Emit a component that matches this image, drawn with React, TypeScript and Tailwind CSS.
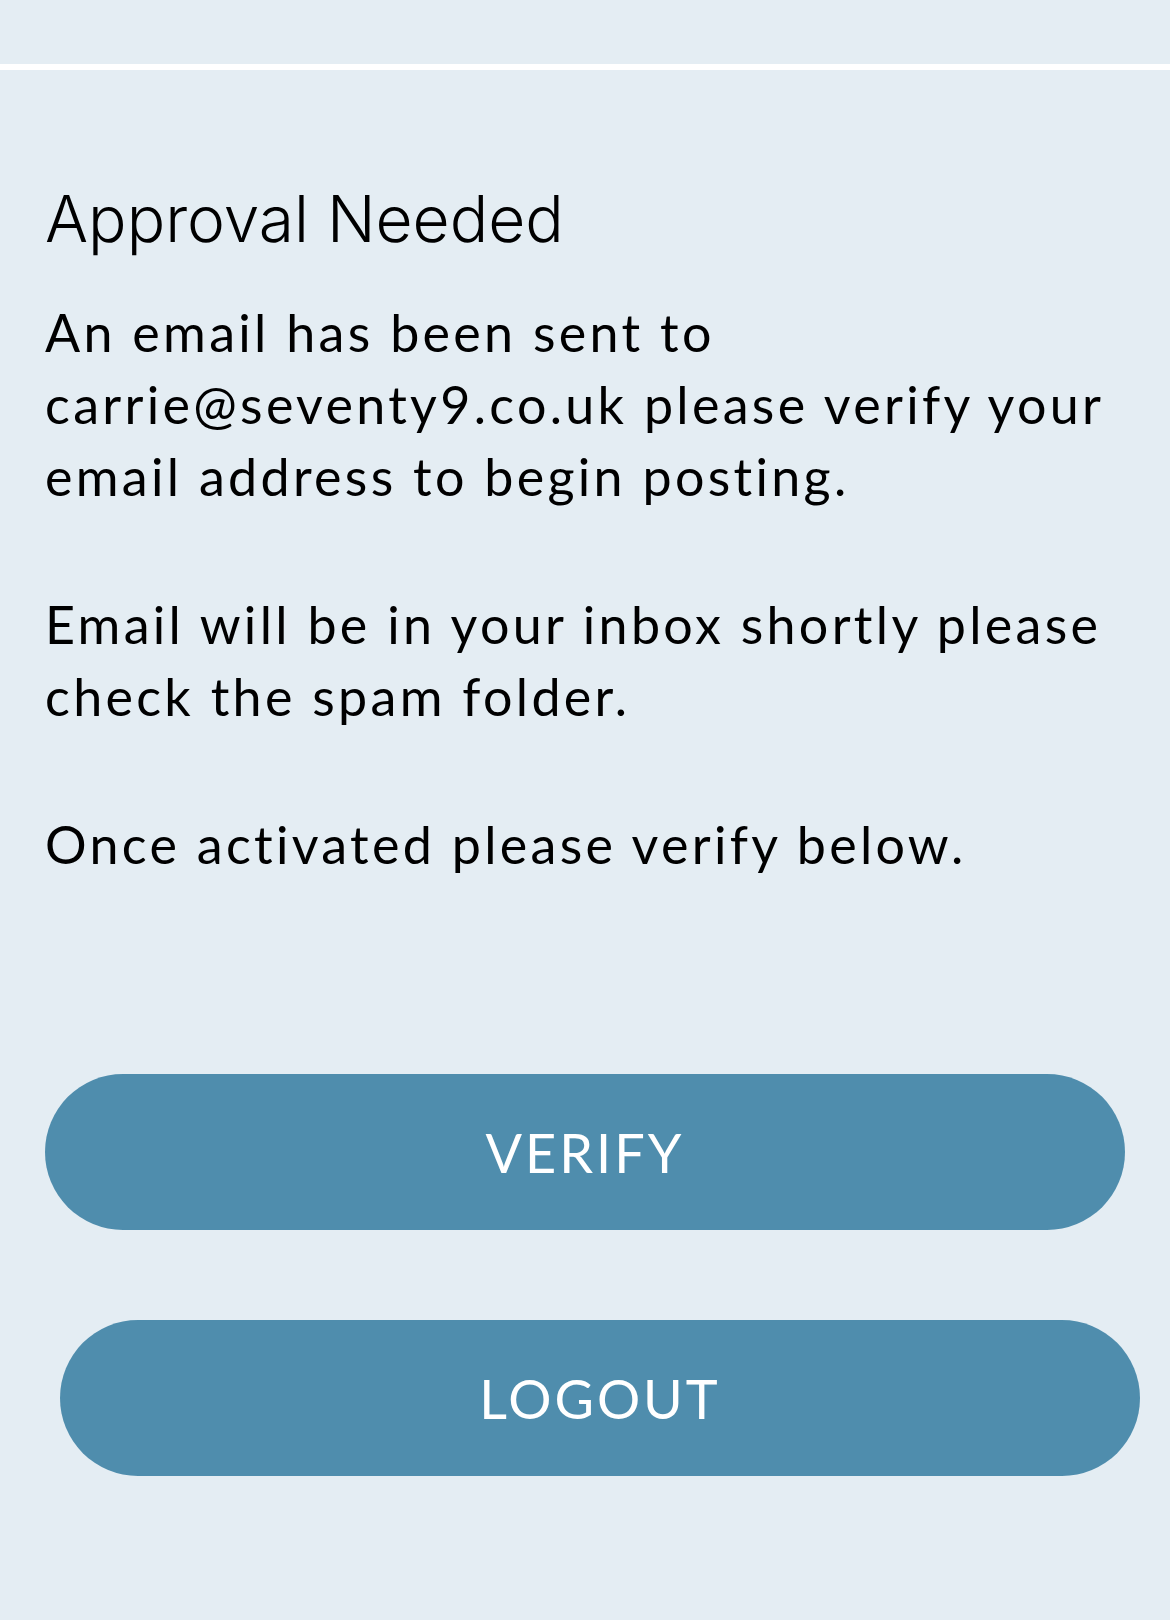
export default function App() {
  return (
    <div className="w-[1170px] h-[1620px] bg-[#e4edf3] overflow-hidden">
      <div className="h-[64px]" />
      <div className="h-[6px] bg-white" />
      <div className="px-[45px]">
        <h1 className="mt-[110px] text-[64px] leading-[77px] font-light text-black tracking-[0px]" style={{ fontFamily: "Inter, 'Liberation Sans', sans-serif" }}>
          Approval Needed
        </h1>
        <div className="mt-[39px] text-[52px] leading-[72px] text-black tracking-[3.3px]" style={{ fontFamily: "Lato, 'Open Sans', sans-serif" }}>
          <p>An email has been sent to carrie@seventy9.co.uk please verify your email address to begin posting.</p>
          <p className="mt-[76px]">Email will be in your inbox shortly please check the spam folder.</p>
          <p className="mt-[76px]">Once activated please verify below.</p>
        </div>
      </div>
      <div className="mt-[194px] flex flex-col" style={{ fontFamily: "Lato, 'Open Sans', sans-serif" }}>
        <button className="ml-[45px] w-[1080px] h-[156px] rounded-full bg-[#4f8dad] text-white text-[54px] tracking-[3px] flex items-center justify-center">
          VERIFY
        </button>
        <button className="mt-[90px] ml-[60px] w-[1080px] h-[156px] rounded-full bg-[#4f8dad] text-white text-[54px] tracking-[3px] flex items-center justify-center">
          LOGOUT
        </button>
      </div>
    </div>
  );
}
